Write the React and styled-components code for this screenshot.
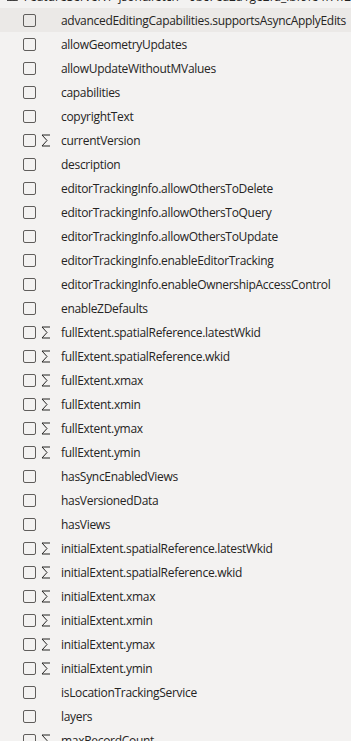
import styled, { createGlobalStyle } from "styled-components";

const GlobalStyle = createGlobalStyle`
  html, body {
    margin: 0;
    padding: 0;
    background: #f3f2f1;
    font-family: "Open Sans", "Noto Sans", sans-serif;
    overflow: hidden;
  }
`;

const Pane = styled.div`
  width: 351px;
  height: 741px;
  overflow: hidden;
  background: #f3f2f1;
`;

const Header = styled.div`
  display: flex;
  align-items: center;
  gap: 6px;
  height: 24px;
  margin-top: -16px;
  padding-left: 7px;
  font-size: 12px;
  color: #252423;
  white-space: nowrap;
`;

const Row = styled.div`
  display: flex;
  align-items: center;
  height: 24px;
  padding-left: 23px;
  background: ${(p) => (p.$active ? "#ebe9e7" : "transparent")};
  white-space: nowrap;
`;

const Check = styled.span`
  box-sizing: border-box;
  width: 13px;
  height: 13px;
  border: 1px solid #605e5c;
  border-radius: 2px;
  flex: none;
`;

const Agg = styled.span`
  width: 17px;
  margin-left: 5px;
  flex: none;
  display: flex;
  align-items: center;
`;

const Label = styled.span`
  margin-left: 3px;
  font-size: 12px;
  letter-spacing: -0.3px;
  color: #252423;
`;

const TableIcon = () => (
  <svg width="13" height="12" viewBox="0 0 13 12" fill="none" stroke="#252423" strokeWidth="1">
    <rect x="0.5" y="0.5" width="12" height="11" />
    <path d="M0.5 4.5H12.5M0.5 8H12.5M4.5 4.5V11.5M8.5 4.5V11.5" />
  </svg>
);

const Sigma = () => (
  <svg width="10" height="13" viewBox="0 0 10 13" fill="none" stroke="#252423" strokeWidth="1">
    <path d="M9 1H1l5 5.5L1 12h8" />
  </svg>
);

const fields = [
  ["advancedEditingCapabilities.supportsAsyncApplyEdits", false],
  ["allowGeometryUpdates", false],
  ["allowUpdateWithoutMValues", false],
  ["capabilities", false],
  ["copyrightText", false],
  ["currentVersion", true],
  ["description", false],
  ["editorTrackingInfo.allowOthersToDelete", false],
  ["editorTrackingInfo.allowOthersToQuery", false],
  ["editorTrackingInfo.allowOthersToUpdate", false],
  ["editorTrackingInfo.enableEditorTracking", false],
  ["editorTrackingInfo.enableOwnershipAccessControl", false],
  ["enableZDefaults", false],
  ["fullExtent.spatialReference.latestWkid", true],
  ["fullExtent.spatialReference.wkid", true],
  ["fullExtent.xmax", true],
  ["fullExtent.xmin", true],
  ["fullExtent.ymax", true],
  ["fullExtent.ymin", true],
  ["hasSyncEnabledViews", false],
  ["hasVersionedData", false],
  ["hasViews", false],
  ["initialExtent.spatialReference.latestWkid", true],
  ["initialExtent.spatialReference.wkid", true],
  ["initialExtent.xmax", true],
  ["initialExtent.xmin", true],
  ["initialExtent.ymax", true],
  ["initialExtent.ymin", true],
  ["isLocationTrackingService", false],
  ["layers", false],
  ["maxRecordCount", true],
];

export default function App() {
  return (
    <Pane>
      <GlobalStyle />
      <Header>
        <TableIcon />
        <span>FeatureServer?f=json&amp;fetch - 0bc7ea2a1ge2fd_lbf9fe4f7ff2</span>
      </Header>
      {fields.map(([name, sum], i) => (
        <Row key={name} $active={i === 0}>
          <Check />
          <Agg>{sum && <Sigma />}</Agg>
          <Label>{name}</Label>
        </Row>
      ))}
    </Pane>
  );
}
